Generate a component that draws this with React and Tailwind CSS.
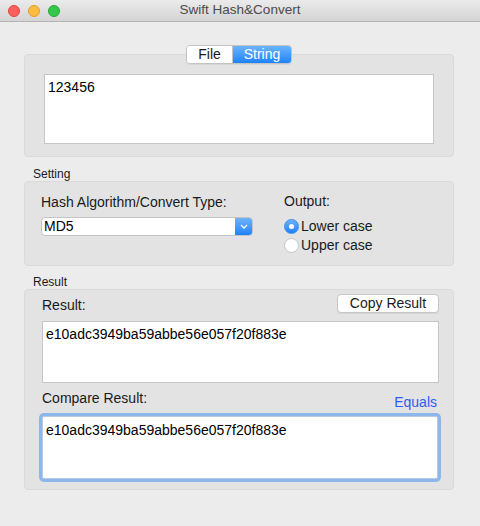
import React, { useState } from "react";

const font = { fontFamily: '"Liberation Sans", Arial, sans-serif' };

function Radio({ checked, label }) {
  return (
    <div className="flex items-center h-[19px]">
      {checked ? (
        <div className="w-[15px] h-[15px] rounded-full bg-gradient-to-b from-[#6ab2fb] to-[#1b7ff5] border border-[#3a8ef0] flex items-center justify-center">
          <div className="w-[5px] h-[5px] rounded-full bg-white" />
        </div>
      ) : (
        <div className="w-[15px] h-[15px] rounded-full bg-white border border-[#c4c4c4]" />
      )}
      <span className="ml-[2px] text-[14px] text-[#1a1a1a]">{label}</span>
    </div>
  );
}

export default function App() {
  const [tab, setTab] = useState("String");
  const hash = "e10adc3949ba59abbe56e057f20f883e";

  return (
    <div className="w-[480px] h-[526px] bg-[#ececec] flex flex-col overflow-hidden" style={font}>
      {/* title bar */}
      <div className="relative h-[22px] bg-gradient-to-b from-[#ebebeb] to-[#d4d4d4] border-b border-[#b4b4b4] flex items-center justify-center">
        <div className="absolute left-[8px] top-[5px] flex gap-[8px]">
          <div className="w-[12px] h-[12px] rounded-full bg-[#fc605c] border border-[#e0443e]" />
          <div className="w-[12px] h-[12px] rounded-full bg-[#fdbc40] border border-[#dea123]" />
          <div className="w-[12px] h-[12px] rounded-full bg-[#34c84a] border border-[#27a53a]" />
        </div>
        <span className="text-[13.5px] text-[#4b4b4b]">Swift Hash&amp;Convert</span>
      </div>

      <div className="ml-[24px] w-[430px] flex flex-col">
        {/* segmented control */}
        <div className="relative z-10 mt-[23px] mb-[-10px] flex self-center">
          <div className="flex h-[19px] rounded-[4px] border border-[#c3c3c3] overflow-hidden shadow-[0_1px_0_rgba(0,0,0,0.05)]">
            <button
              onClick={() => setTab("File")}
              className={`w-[45px] text-[14px] leading-[17px] ${tab === "File" ? "bg-gradient-to-b from-[#6cb3fa] to-[#1a82fb] text-white" : "bg-white text-[#1a1a1a]"}`}
            >
              File
            </button>
            <button
              onClick={() => setTab("String")}
              className={`w-[59px] text-[14px] leading-[17px] border-l border-[#c3c3c3] ${tab === "String" ? "bg-gradient-to-b from-[#6cb3fa] to-[#1a82fb] text-white" : "bg-white text-[#1a1a1a]"}`}
            >
              String
            </button>
          </div>
        </div>

        {/* input box */}
        <div className="h-[103px] bg-[#e3e3e3] border border-[#dadada] rounded-[4px] pt-[19px] pl-[19px]">
          <div className="w-[390px] h-[70px] bg-white border border-[#c6c6c6] px-[3px] pt-[2px] text-[14px] text-black">
            123456
          </div>
        </div>

        {/* setting */}
        <div className="mt-[10px] h-[14px] pl-[9px] text-[12px] leading-[14px] text-[#1a1a1a]">Setting</div>
        <div className="h-[85px] bg-[#e3e3e3] border border-[#dadada] rounded-[4px] flex">
          <div className="w-[243px] pl-[16px] pt-[12px] flex flex-col">
            <div className="h-[16px] text-[14px] leading-[16px] text-[#1a1a1a]">Hash Algorithm/Convert Type:</div>
            <div className="mt-[7px] w-[212px] h-[19px] flex rounded-[4px] border border-[#c4c4c4] bg-white overflow-hidden">
              <span className="flex-1 pl-[2px] text-[14px] leading-[17px] text-black">MD5</span>
              <div className="w-[17px] bg-gradient-to-b from-[#6cb3fa] to-[#1a82fb] flex items-center justify-center">
                <svg width="8" height="5" viewBox="0 0 8 5">
                  <path d="M1 1 L4 4 L7 1" stroke="white" strokeWidth="1.4" fill="none" />
                </svg>
              </div>
            </div>
          </div>
          <div className="pl-[16px] pt-[11px] flex flex-col">
            <div className="h-[16px] text-[14px] leading-[16px] text-[#1a1a1a] mb-[8px]">Output:</div>
            <Radio checked label="Lower case" />
            <Radio label="Upper case" />
          </div>
        </div>

        {/* result */}
        <div className="mt-[9px] h-[14px] pl-[9px] text-[12px] leading-[14px] text-[#1a1a1a]">Result</div>
        <div className="h-[201px] bg-[#e3e3e3] border border-[#dadada] rounded-[4px] pl-[17px] pr-[14px] flex flex-col">
          <div className="flex items-center justify-between mt-[4px] h-[19px]">
            <span className="text-[14px] text-[#1a1a1a] mt-[3px]">Result:</span>
            <button className="w-[102px] h-[19px] bg-white border border-[#c6c6c6] rounded-[4px] text-[14px] leading-[17px] text-[#1a1a1a] shadow-[0_1px_0_rgba(0,0,0,0.06)]">
              Copy Result
            </button>
          </div>
          <div className="mt-[8px] w-[397px] h-[62px] bg-white border border-[#c6c6c6] px-[3px] pt-[2px] text-[14px] text-black">
            {hash}
          </div>
          <div className="mt-[6px] flex items-end justify-between h-[26px] pr-[2px]">
            <span className="text-[14px] text-[#1a1a1a] mb-[6px]">Compare Result:</span>
            <span className="text-[14px] text-[#2d5cf6] mb-[2px]">Equals</span>
          </div>
          <div className="mt-[1px] w-[396px] h-[63px] bg-white border border-[#b8c9e0] ring-[3px] ring-[#8db6ea] rounded-[2px] px-[3px] pt-[3px] text-[14px] text-black">
            {hash}
          </div>
        </div>
      </div>
    </div>
  );
}
